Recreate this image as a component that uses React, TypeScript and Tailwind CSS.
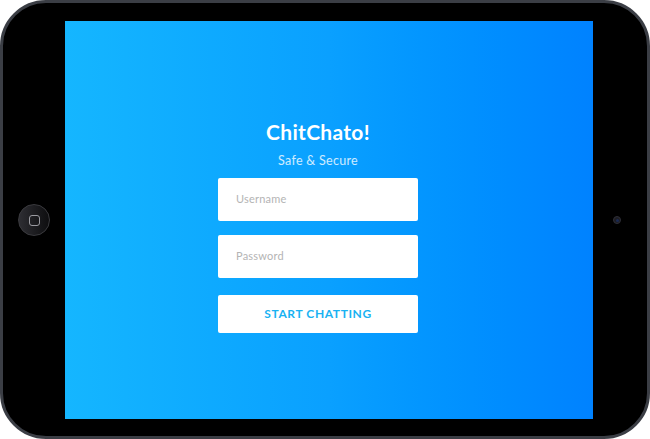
export default function App() {
  return (
    <div className="w-[650px] h-[439px] bg-white" style={{ fontFamily: "Lato, 'Open Sans', sans-serif" }}>
      <div className="w-full h-full rounded-[46px] border-[3px] border-[#3b3e45] bg-black flex">
        {/* left bezel with home button */}
        <div className="w-[62px] flex items-center justify-center pt-[1px]">
          <div className="w-[32px] h-[32px] rounded-full border border-[#3a3a3e] bg-gradient-to-r from-[#2e2e33] to-[#0e0e10] flex items-center justify-center">
            <div className="w-[11px] h-[11px] rounded-[3px] border border-[#9a9aa0]" />
          </div>
        </div>

        {/* screen */}
        <div className="mt-[18px] mb-[17px] w-[528px] bg-gradient-to-r from-[#15b6ff] via-[#0aa0ff] to-[#0082ff] flex flex-col items-center pt-[97px] pr-[22px]">
          <h1 className="text-white font-bold text-[21px] leading-[28px] tracking-[0.3px]">ChitChato!</h1>
          <p className="text-white/80 text-[12.5px] leading-[16px] mt-[7px] tracking-[0.3px]">Safe &amp; Secure</p>
          <div className="mt-[9px] w-[200px] h-[43px] bg-white rounded-[2px] flex items-center px-[18px] text-[11px] text-[#b4b4b4] tracking-[0.2px]">
            Username
          </div>
          <div className="mt-[14px] w-[200px] h-[43px] bg-white rounded-[2px] flex items-center px-[18px] text-[11px] text-[#b4b4b4] tracking-[0.2px]">
            Password
          </div>
          <button className="mt-[17px] w-[200px] h-[38px] bg-white rounded-[2px] flex items-center justify-center text-[12px] font-bold text-[#1ab2f2] tracking-[0.6px]">
            START CHATTING
          </button>
        </div>

        {/* right bezel with camera */}
        <div className="flex-1 flex items-center justify-center pr-[6px] pt-[1px]">
          <div className="w-[8px] h-[8px] rounded-full bg-[#1c1c22] border border-[#2e2e36] flex items-center justify-center">
            <div className="w-[3px] h-[3px] rounded-full bg-[#1a2a55]" />
          </div>
        </div>
      </div>
    </div>
  );
}
